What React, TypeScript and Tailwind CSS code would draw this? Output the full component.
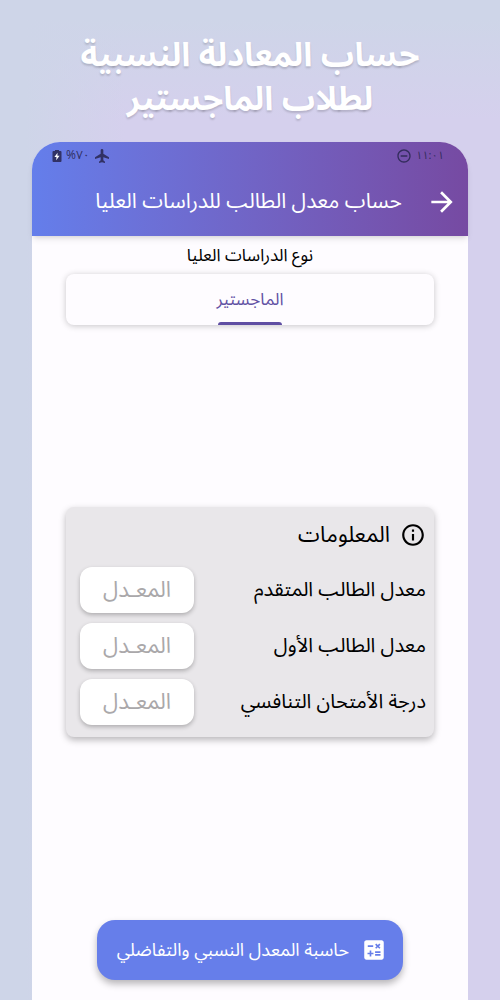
import { useState } from "react";
import { MdArrowForward, MdCalculate, MdInfoOutline, MdRemoveCircleOutline } from "react-icons/md";

const fields = [
  { id: "applicant", label: "معدل الطالب المتقدم" },
  { id: "first", label: "معدل الطالب الأول" },
  { id: "exam", label: "درجة الأمتحان التنافسي" },
];

function StatusBar() {
  return (
    <div dir="ltr" className="flex h-7 items-center justify-between pr-6 pl-5 text-xs text-[#28264f]/85">
      <div className="flex items-center gap-1">
        <svg className="h-3 w-2.5" viewBox="0 0 10 12" aria-hidden="true">
          <path d="M3 0h4v1h1.5A1 1 0 0 1 9.5 2v9a1 1 0 0 1-1 1h-7a1 1 0 0 1-1-1V2a1 1 0 0 1 1-1H3z" fill="currentColor" />
          <path d="M5.6 2.8 2.4 7h2.1L4.2 10.2 7.6 5.8H5.4z" fill="#fff" />
        </svg>
        <span>%٧٠</span>
        <svg className="size-4" viewBox="0 0 24 24" fill="currentColor" aria-hidden="true">
          <path d="M22.500 16.500v-2.500l-8.500-5.500V3.500a2 2 0 0 0-4 0v5L1.500 14v2.500l8.500-2.500v4.500L7.500 20.500V22.500l4.500-1.200 4.500 1.200v-2L14 18.500V14z" />
        </svg>
      </div>
      <div className="flex items-center gap-1">
        <MdRemoveCircleOutline className="size-4" />
        <span className="text-[11px]">١١:٠١</span>
      </div>
    </div>
  );
}

export default function App() {
  const [values, setValues] = useState<Record<string, string>>({});

  return (
    <div
      dir="rtl"
      className="flex min-h-screen flex-col bg-[linear-gradient(to_right,#ced5e8_5%,transparent_25%),linear-gradient(to_bottom,#ced5e8_2%,#d5d0ed_12%)] px-8 font-['Noto_Sans_Arabic','DejaVu_Sans',sans-serif]"
    >
      <h1 className="pt-[34px] pb-5 text-center text-[33px] leading-11 font-bold text-white [text-shadow:0_2px_2px_rgb(0_0_0/0.15)]">
        حساب المعادلة النسبية
        <br />
        لطلاب الماجستير
      </h1>

      <main className="flex grow flex-col rounded-t-[28px] bg-[#fefcff]">
        <header className="h-[94px] rounded-t-[28px] bg-linear-to-r from-[#647eeb] to-[#764aa2] text-white shadow-md">
          <StatusBar />
          <div className="flex h-16 items-center gap-6 px-2.5">
            <button type="button" aria-label="رجوع">
              <MdArrowForward className="size-8" />
            </button>
            <h2 className="text-[21px]">حساب معدل الطالب للدراسات العليا</h2>
          </div>
        </header>

        <div className="flex grow flex-col px-[34px] pb-5">
          <p className="pt-2 pb-1.5 text-center text-[17px] leading-6 text-black">نوع الدراسات العليا</p>
          <div role="tablist" className="flex h-[51px] justify-center rounded-lg shadow-[0_1px_6px_rgb(0_0_0/0.22)]">
            <button
              type="button"
              role="tab"
              aria-selected="true"
              className="flex flex-col items-center text-[17px] text-[#6252a4]"
            >
              <span className="flex grow items-center pt-1.5">الماجستير</span>
              <span className="h-[3px] w-16 rounded-t-full bg-[#5f4ea3]" />
            </button>
          </div>

          <section className="mt-[182px] rounded-lg bg-[#e9e7ea] px-2 pb-3 shadow-[0_3px_7px_rgb(0_0_0/0.28)]">
            <h3 className="flex h-14 items-center gap-2.5 text-[22px] text-black">
              <MdInfoOutline className="size-[26px]" />
              المعلومات
            </h3>
            <div className="flex flex-col gap-2.5 pt-1 pl-1.5">
              {fields.map((field) => (
                <div key={field.id} className="flex items-center justify-between">
                  <label htmlFor={field.id} className="text-xl text-black">
                    {field.label}
                  </label>
                  <input
                    id={field.id}
                    inputMode="decimal"
                    placeholder="المعـدل"
                    value={values[field.id] ?? ""}
                    onChange={(e) => setValues({ ...values, [field.id]: e.target.value })}
                    className="h-[46px] w-[114px] rounded-xl bg-white text-center text-[22px] text-black shadow-[0_2px_4px_rgb(0_0_0/0.25)] placeholder:text-[#aaa8aa]"
                  />
                </div>
              ))}
            </div>
          </section>

          <button
            type="button"
            className="mx-auto mt-auto flex h-[60px] items-center gap-3 rounded-[18px] bg-[#667eea] ps-4 pe-5 text-lg text-white shadow-[0_4px_7px_rgb(0_0_0/0.28)]"
          >
            <MdCalculate className="size-[26px]" />
            حاسبة المعدل النسبي والتفاضلي
          </button>
        </div>
      </main>
    </div>
  );
}
